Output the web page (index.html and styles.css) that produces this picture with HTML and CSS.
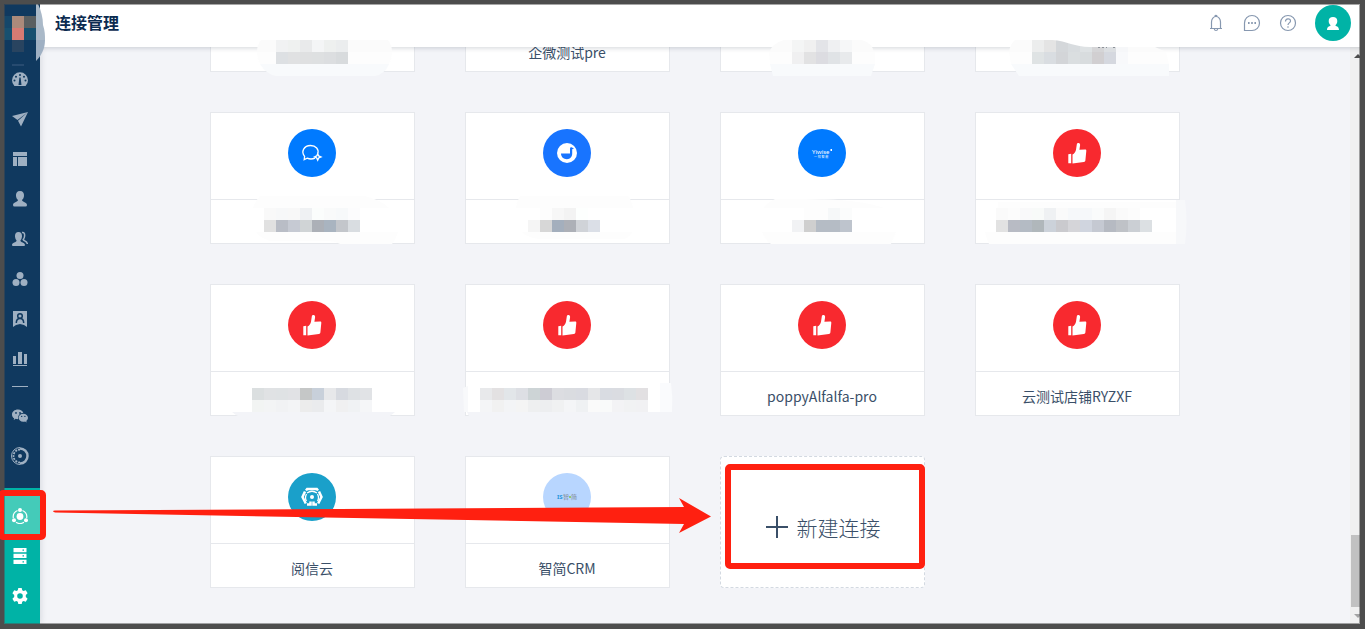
FILE: index.html
```html
<!DOCTYPE html>
<html lang="zh-CN">
<head>
  <meta charset="UTF-8">
  <meta name="viewport" content="width=device-width, initial-scale=1.0">
  <title>连接管理</title>
  <link rel="stylesheet" href="styles.css">
</head>
<body>

  <!-- shared icons -->
  <svg class="sprite" aria-hidden="true">
    <symbol id="i-thumb" viewBox="0 0 48 48">
      <path fill="#fff" d="M15.3 25.2l2.9-.5v9.6h-2.9zM19.5 34.6V25.4c2-.9 3-2.5 3.5-4.7l.8-5.2c.2-1.2.8-1.7 1.8-1.5 1.2.2 1.6 1 1.5 2.2l-.7 4.6 5.6-.2c1 0 1.4.5 1.3 1.4l-.9 9.300c-.1 1-.6 1.500-1.600 1.600z"/>
    </symbol>
  </svg>

  <nav class="sidebar">
    <div class="logo">
      <svg width="48" height="64" shape-rendering="crispEdges">
        <path fill="#15476a" d="M4 16h8v12H4z"/>
        <path fill="#17506f" d="M4 28h8v12H4zM24 28h12v12H24z"/>
        <path fill="#ab8a7b" d="M12 16h12v12H12z"/>
        <path fill="#5a5f61" d="M24 16h12v12H24z"/>
        <path fill="#d67b73" d="M12 28h12v12H12z"/>
        <path fill="#294460" d="M12 40h12v12H12z"/>
        <path fill="#274b70" d="M12 64h12v2H12z"/>
        <path fill="#aab9c8" shape-rendering="auto" d="M36 4h2c3 6 5 14 5 21 2 6 2 10 2 15h-9z"/>
        <path fill="#9fb0c3" shape-rendering="auto" d="M36 40h9c0 9-4 16-9 21z"/>
      </svg>
    </div>
    <a class="nav-item" href="#" aria-label="仪表盘"><svg viewBox="0 0 16 16"><path fill="currentColor" fill-rule="evenodd" d="M2.4 15A8 8 0 1 1 13.6 15zM8 3a1 1 0 1 0 0 2 1 1 0 0 0 0-2zM4 4.800a1 1 0 1 0 0 2 1 1 0 0 0 0-2zm8 0a1 1 0 1 0 0 2 1 1 0 0 0 0-2zM2.500 8.500a1 1 0 1 0 0 2 1 1 0 0 0 0-2zm11 0a1 1 0 1 0 0 2 1 1 0 0 0 0-2zM7.400 6.500L6.500 14h3l-.9-7.500z"/></svg></a>
    <a class="nav-item" href="#" aria-label="发送"><svg viewBox="0 0 16 16"><path fill="currentColor" d="M0 5L16 1 5.500 9zM6 9.700L16 1 9 15.500z"/></svg></a>
    <a class="nav-item" href="#" aria-label="页面"><svg viewBox="0 0 16 16"><path fill="currentColor" d="M1 1h14v4H1zM1 6h4v9H1zM6 6h9v9H6z"/></svg></a>
    <a class="nav-item" href="#" aria-label="用户"><svg viewBox="0 0 16 16"><path fill="currentColor" d="M8 0c3 0 4.300 2 4 5-.2 2-1 3.200-2 4 .2 2 5 2 5 5q0 1.500-1.500 1.500h-11Q1 15.500 1 14c0-3 4.800-3 5-5-1-.8-1.800-2-2-4-.3-3 1-5 4-5z"/></svg></a>
    <a class="nav-item" href="#" aria-label="群组"><svg viewBox="0 0 16 16"><path fill="currentColor" d="M6.500 1c2.600 0 3.700 2 3.500 4.500-.2 2-.8 3-1.600 4 .2 2 4.600 2 4.600 4.600 0 .6-.3.900-1 .9H1q-1 0-1-.9c0-2.600 4.400-2.600 4.600-4.600-.8-1-1.400-2-1.600-4C2.800 3 4 1 6.500 1z"/><path fill="none" stroke="currentColor" stroke-width="1.500" d="M10 1.500c2-.5 2.800 1.200 2.600 3.500-.1 1.700-.6 2.700-1.400 3.500.3 1.500 4 1.500 4.200 4.500"/></svg></a>
    <a class="nav-item" href="#" aria-label="标签"><svg viewBox="0 0 16 16"><g fill="currentColor"><circle cx="8" cy="4.500" r="3.500"/><circle cx="4" cy="11.500" r="3.500"/><circle cx="12" cy="11.500" r="3.500"/></g></svg></a>
    <a class="nav-item" href="#" aria-label="名片"><svg viewBox="0 0 16 16"><path fill="currentColor" d="M1 0h14v16l-3-2-4-1-4 1-3 2z"/><g fill="none" stroke="#10395f" stroke-width="1.500"><circle cx="8" cy="5" r="2.300"/><path d="M4.300 12c0-3 1-4.600 3.700-4.600s3.700 1.600 3.700 4.600"/></g></svg></a>
    <a class="nav-item" href="#" aria-label="统计"><svg viewBox="0 0 16 16"><path fill="currentColor" d="M1 5h3v8H1zM6 1h4v12H6zM12 3h3v10h-3zM1 14h14v1H1z"/></svg></a>
    <hr class="nav-line">
    <a class="nav-item" href="#" aria-label="微信"><svg viewBox="0 0 16 16"><path fill="currentColor" fill-rule="evenodd" d="M6 1.500C2.500 1.500 0 3.700 0 6.400c0 1.600.8 3 2.200 3.900L1.700 12l2-1.200c.8.300 1.600.4 2.500.3C5.500 7.500 8 5 11.300 5 10.700 3 8.700 1.500 6 1.500zM4 4a.9.900 0 1 1 0 1.800A.9.900 0 0 1 4 4zm4 0a.9.900 0 1 1 0 1.800A.9.900 0 0 1 8 4zM11.300 5.800c-2.700 0-4.700 1.700-4.700 4s2 4 4.700 4c.6 0 1.200-.1 1.800-.3l1.600.9-.4-1.500c1-.8 1.700-1.800 1.700-3.100 0-2.300-2-4-4.700-4zM9.700 7.700a.7.700 0 1 1 0 1.400.7.700 0 0 1 0-1.400zm3.200 0a.7.700 0 1 1 0 1.400.7.700 0 0 1 0-1.400z"/></svg></a>
    <a class="nav-item" href="#" aria-label="数据"><svg class="wide" viewBox="0 0 18 18"><g fill="none" stroke="currentColor"><path stroke-width="2.500" d="M9 1.500a7.500 7.500 0 0 1 0 15"/><path stroke-width="1" d="M9 .5a8.500 8.500 0 0 0 0 17"/><path stroke-width="1.800" stroke-dasharray="2 1" d="M9 2.500a6.500 6.500 0 0 0 0 13"/></g><circle cx="9" cy="9" r="2" fill="currentColor"/></svg></a>
    <div class="nav-bottom">
      <a class="nav-item active" href="#" aria-label="连接管理"><svg viewBox="0 0 16 16"><g fill="none" stroke="currentColor" stroke-width="1.200"><path d="M5.500 2.500A7 7 0 0 0 1.300 10M10.500 2.500A7 7 0 0 1 14.700 10M4 14.200a7 7 0 0 0 8 0"/></g><g fill="currentColor"><circle cx="8" cy="8.500" r="3.400"/><circle cx="8" cy="2" r="2"/><circle cx="2" cy="12.300" r="2"/><circle cx="14" cy="12.300" r="2"/></g></svg></a>
      <a class="nav-item" href="#" aria-label="存储"><svg viewBox="0 0 16 16"><path fill="currentColor" fill-rule="evenodd" d="M1.500 0h13v4.300h-13zM10.500 1.500v1.300H12V1.500zM1.500 5.800h13v4.300h-13zM10.500 7.300v1.300H12V7.300zM1.500 11.700h13V16h-13zM10.500 13.200v1.300H12v-1.300z"/></svg></a>
      <a class="nav-item" href="#" aria-label="设置"><svg viewBox="0 0 16 16"><path fill="currentColor" fill-rule="evenodd" d="M6.300 0h3.400l.5 2.300 1.300.8 2.300-.8L15.600 5.200l-1.800 1.700v2l1.800 1.800-1.800 3-2.300-.8-1.300.8L9.700 16H6.300l-.5-2.300-1.300-.8-2.300.8-1.800-3 1.800-1.700V7L.4 5.200l1.800-2.900 2.300.8 1.300-.8zM8 5.200a2.800 2.800 0 1 0 0 5.600 2.800 2.800 0 0 0 0-5.600z"/></svg></a>
    </div>
  </nav>

  <div class="page">
    <header class="topbar">
      <h1>连接管理</h1>
      <div class="tools">
        <button class="tool" aria-label="通知"><svg viewBox="0 0 20 20"><path d="M4 15.500h12M5.500 15.500V9a4.500 5.500 0 0 1 9 0v6.500M8.300 16c.3 2 3.100 2 3.400 0M9 3.200c0-1.200 2-1.200 2 0"/></svg></button>
        <button class="tool" aria-label="消息"><svg viewBox="0 0 20 20"><path d="M2.500 17.500V10A7.500 7.500 0 1 1 10 17.500z"/><path stroke-width="1.800" d="M6 10h1.600M9.200 10h1.600M12.400 10H14"/></svg></button>
        <button class="tool" aria-label="帮助"><svg viewBox="0 0 20 20"><circle cx="10" cy="10" r="7.500"/><path d="M7.500 8.500C7.500 5 12.500 5 12.500 8c0 2-2.500 1.800-2.500 4M10 13.200v1.500"/></svg></button>
        <button class="avatar" aria-label="账户"><svg viewBox="0 0 36 36"><path fill="#fff" d="M18 12c2.700 0 4.300 1.600 4.300 4 0 2-.8 3.400-2 4.300.3 1 3.700 1 3.700 4.700H12c0-3.700 3.400-3.700 3.700-4.700-1.200-.9-2-2.300-2-4.300 0-2.400 1.600-4 4.300-4z"/></svg></button>
      </div>
    </header>

    <div class="content">
      <main class="list">
        <div class="grid">

          <section class="card">
            <div class="card-top"><div class="icon"></div></div>
            <p class="name"></p>
            <svg class="mask">
              <path fill="#fbfbfb" d="M51 100h127q4 5 4 12H47q0-7 4-12z"/>
              <path fill="#fdfdfd" d="M47 112h135q0 6-3 12H50q-3-6-3-12z"/>
              <path fill="#f8fafc" d="M50 124h129q-4 10-14 12H66q-10-2-16-12z"/>
              <g data-x="66" data-y="100" data-cells="f1f2f3 eff1f0 e9eaeb f4f5f6 eef0ef ebedee"></g>
              <g data-x="66" data-y="112" data-cells="dde0e3 e0e1e2 dfe0e1 dee0e1 dcdee0 d8dbdd"></g>
            </svg>
          </section>

          <section class="card">
            <div class="card-top"><div class="icon"></div></div>
            <p class="name">企微测试pre</p>
          </section>

          <section class="card">
            <div class="card-top"><div class="icon"></div></div>
            <p class="name"></p>
            <svg class="mask">
              <path fill="#fbfbfb" d="M64 100h78q10 3 12 12H49q4-9 15-12z"/>
              <path fill="#fdfdfd" d="M49 112h106v12H50z"/>
              <path fill="#f8fafc" d="M50 124h105l-4 12H53z"/>
              <g data-x="72" data-y="100" data-cells="f4f5f5 f0f0f0 e3e4e8 eff0f2 f6f7f8"></g>
              <g data-x="72" data-y="112" data-cells="f0f0f1 e2e2e3 dcdce1 e0e3e6 e8eaec"></g>
            </svg>
          </section>

          <section class="card">
            <div class="card-top"><div class="icon"></div></div>
            <p class="name"></p>
            <svg class="mask">
              <path fill="#fbfbfb" d="M40 100h65v7h75l11 5H34q1-8 6-12z"/>
              <path fill="#fdfdfd" d="M34 112h157l3 12H36z"/>
              <path fill="#f8fafc" d="M36 124h158v12H44z"/>
              <g data-x="57" data-y="100" data-cells="eceded e4e4e4 d4d7da d8dcdf dee2e4 d5d5d7 dcdfe2 f6f7f9"></g>
              <g data-x="57" data-y="112" data-cells="dfe3e4 d9dde1 d3d5d8 dadee0 d8dcde d1cfd1 d5d8df f8f9fb"></g>
              <path class="lift" fill="#fff" d="M77 99h76v8h-38c-16 0-22-6-38-7z"/>
              <path class="lift" stroke="#8d9299" stroke-dasharray="2 2" d="M123 107.500h9M138 107.500h4"/>
            </svg>
          </section>

          <section class="card">
            <div class="card-top"><div class="icon blue"><svg viewBox="0 0 48 48"><g fill="none" stroke="#fff" stroke-width="1.300"><path d="M27 29.200c-2.500 1-5.500 1-7.800 0l-3 1.400.4-3.300c-3.900-4.600-.6-10.800 5.900-10.800 5.500 0 8.600 4 7.300 8"/><path d="M29.700 24.700l1 2.200 2.300 1-2.300 1-1 2.300-1-2.300-2.200-1 2.200-1z"/></g></svg></div></div>
            <p class="name"></p>
            <svg class="mask">
              <path fill="#fdfdfd" d="M50 84h105q16 4 24 12H43q2-7 7-12zM46 120h142q-3 9-6 12h-52q-5-3-13-3H60q-10-3-14-9z"/>
              <g data-x="54" data-y="96" data-cells="f9f9f9 f7f8f9 f8f8f8 eff1f3 fbfdfc f9fafa f7f9fa fcfcfd"></g>
              <g data-x="54" data-y="108" data-cells="e1e1e1 b9bdc6 c6cad3 d0d4d6 acb0b7 a9b4c0 c3c6cb d9dde1"></g>
            </svg>
          </section>

          <section class="card">
            <div class="card-top"><div class="icon indigo"><svg viewBox="0 0 48 48"><circle cx="24" cy="24" r="10" fill="#fff"/><path fill="#1874ff" d="M18 24.500h9V20c0-1.500.8-2 2-1.500l2 1-1.800.8v4.200c0 3.300-2 5.700-5.300 5.700S18 28 18 24.500z"/></svg></div></div>
            <p class="name"></p>
            <svg class="mask">
              <path fill="#fdfdfd" d="M55 84h108q4 5 5 12H51q1-7 4-12zM57 120h110q-4 8-12 7H75q-12-1-18-7z"/>
              <g data-x="75" data-y="96" data-cells="fdfdfd f7f7f7 f3f3f3 fdfffe"></g>
              <g data-x="63" data-y="108" data-cells="f5f5f5 d7d7d7 a4afbd adb0b7 d0d3d8 dbdfe7"></g>
            </svg>
          </section>

          <section class="card">
            <div class="card-top"><div class="icon blue"><svg viewBox="0 0 48 48"><g fill="#fff" class="logo-text"><text x="14" y="25" font-size="6">Yiwise</text><text x="16" y="29" font-size="3">一 知 智 能</text><path d="M32.500 20h1.500v2h-1.500z"/></g></svg></div></div>
            <p class="name"></p>
            <svg class="mask">
              <path fill="#fdfdfd" d="M55 87h30q55 0 79 9H44q4-6 11-9zM42 120h134q-3 6-5 12H51q-6-5-9-12z"/>
              <g data-x="84" data-y="96" data-cells="fdfdfd fdfdfd f6f8f9 fbfcfc"></g>
              <g data-x="72" data-y="108" data-cells="f1f2f4 cfcfcf b5bcc5 b5bcc5 bec4cd"></g>
            </svg>
          </section>

          <section class="card">
            <div class="card-top"><div class="icon red"><svg><use href="#i-thumb"/></svg></div></div>
            <p class="name"></p>
            <svg class="mask">
              <path fill="#fdfdfd" d="M23 90h178v42H14q-3-6-4-12h11z"/>
              <path fill="#f7f8fa" d="M201 88h9q3 22 0 44h-9z"/>
              <path fill="#fff" d="M21 96h180v24H21z"/>
              <g data-x="21" data-y="96" data-cells="fafafa fcfcfc f9f9fa f8faf9 eff1f3 fafafa f6f8fa f6f8fa fafbfb f5f5f5 fafafa fcfcfc"></g>
              <g data-x="21" data-y="108" data-cells="e2e2e2 b8bbc4 b4bbc4 b0b7bb ccd2da cacace d5d5d9 d0d5df c5c9d2 b6bac2 bfc2c7 cbcfd4 dce0e3"></g>
            </svg>
          </section>

          <section class="card">
            <div class="card-top"><div class="icon red"><svg><use href="#i-thumb"/></svg></div></div>
            <p class="name"></p>
            <svg class="mask">
              <path fill="#f3f4f8" d="M22 128h163q-9 9-30 9H50q-20-1-28-9z"/>
              <g data-x="42" data-y="104" data-cells="dbdfe0 e0e2e4 dfe2e4 e1e2e5 c5c7c7 c8d0da e7e8ea d7dae0 dee1e4 e1e3e6"></g>
              <g data-x="42" data-y="116" data-cells="f2f4f3 f3f4f5 f1f2f4 f3f4f6 ececec eaebed f4f5f7 f0f0f1 f0f2f4 f5f6f8"></g>
            </svg>
          </section>

          <section class="card">
            <div class="card-top"><div class="icon red"><svg><use href="#i-thumb"/></svg></div></div>
            <p class="name"></p>
            <svg class="mask">
              <path fill="#f8f9fb" d="M-2 104l5-2v26h-4z"/>
              <path fill="#fff" d="M183 100h12v28h-12z"/>
              <path fill="#fafbfd" d="M195 99h11q2 14 1 29h-12z"/>
              <path fill="#f3f4f8" d="M2 128h205v10H12q-8-3-10-10z"/>
              <g data-x="15" data-y="104" data-cells="e8e9eb e3e1e2 e2e6e9 dddfe4 cdd4d6 cdccd4 dcdde1 dadce0 d9dbe1 e5e6e8 d9dce2 dadce1 dde1e4 e2e0e2"></g>
              <g data-x="15" data-y="116" data-cells="f4f5f7 f1f1f1 f3f4f6 f4f4f4 eeeff0 edeef0 f0f1f2 f4f5f7 eff1f3 fafafa f9fafa f3f3f5 f1f2f3 f1f1f3"></g>
            </svg>
          </section>

          <section class="card">
            <div class="card-top"><div class="icon red"><svg><use href="#i-thumb"/></svg></div></div>
            <p class="name">poppyAlfalfa-pro</p>
          </section>

          <section class="card">
            <div class="card-top"><div class="icon red"><svg><use href="#i-thumb"/></svg></div></div>
            <p class="name">云测试店铺RYZXF</p>
          </section>

          <section class="card">
            <div class="card-top"><div class="icon cyan"><svg viewBox="0 0 48 48"><g fill="none" stroke="#fff"><path stroke-width="2.500" d="M18 17.500l1.200-1.500h9.600l1.200 1.500M31 18.500l2.500 5.500-3.300 6.500M17 18.500L14.500 24l3.300 6.500M19 31.500h3.500v-3M29 31.500h-3.500v-3"/><path stroke-width="1.300" d="M19 20q5-3.500 10 0M18.500 21q-2 4 0 7M29.500 21q2 4 0 7"/></g><circle cx="24" cy="24" r="2" fill="#fff"/></svg></div></div>
            <p class="name">阅信云</p>
          </section>

          <section class="card">
            <div class="card-top"><div class="icon pale"><svg viewBox="0 0 48 48"><g class="logo-text" font-size="6"><text x="14" y="26" fill="#2a97dd" font-weight="bold">IS</text><text x="20" y="26" fill="#7c8794">智</text><text x="28" y="26" fill="#7c8794">简</text></g><circle cx="27" cy="24" r="1" fill="#84c441"/></svg></div></div>
            <p class="name">智简CRM</p>
          </section>

          <button class="card card-new">
            <svg viewBox="0 0 22 22"><path fill="none" stroke="currentColor" stroke-width="2" d="M11 0v22M0 11h22"/></svg>
            新建连接
          </button>

        </div>
      </main>

      <div class="scrollbar">
        <span class="arrow up"></span>
        <span class="thumb"></span>
        <span class="arrow down"></span>
      </div>
    </div>
  </div>

  <div class="frame"></div>

  <svg class="pointer" viewBox="0 0 660 40" aria-hidden="true">
    <path fill="#ff2010" d="M0 13.500Q0 12.500 2 12.500L631 9 626 0 658 18.500 626 35 631 26 2 14.500z"/>
  </svg>

  <script src="script.js"></script>
</body>
</html>
```
FILE: styles.css
```css
* {
  box-sizing: border-box;
}

body {
  margin: 0;
  padding-bottom: 5px;
  height: 100vh;
  display: flex;
  overflow: hidden;
  position: relative;
  background: #f3f4f8;
  color: #3a4f68;
  font-family: "Noto Sans CJK SC", "Noto Sans", sans-serif;
  font-size: 14px;
}

h1,
p {
  margin: 0;
}

button {
  font: inherit;
  color: inherit;
  border: none;
  padding: 0;
  background: none;
  cursor: pointer;
}

.sprite {
  position: absolute;
  width: 0;
  height: 0;
}

/* Sidebar */
.sidebar {
  width: 40px;
  flex: none;
  display: flex;
  flex-direction: column;
  background: #10395f;
  color: #9fb0c2;
  box-shadow: 1px 0 6px rgba(0, 21, 41, 0.12);
}

.logo {
  height: 59px;
}

.logo svg {
  display: block;
  position: relative;
  overflow: visible;
  z-index: 2;
}

.nav-item {
  height: 40px;
  display: flex;
  align-items: center;
  justify-content: center;
  color: inherit;
}

.nav-item svg {
  width: 16px;
  height: 16px;
}

.nav-item svg.wide {
  width: 18px;
  height: 18px;
}

.nav-line {
  width: 16px;
  height: 1px;
  margin: 7px auto 9px;
  border: none;
  background: #9fb0c2;
}

.nav-bottom {
  margin-top: auto;
  padding: 8px 0;
  background: #00b3a6;
  color: #fff;
}

.nav-item.active {
  position: relative;
  background: #44cbb9;
}

.nav-item.active::after {
  content: "";
  position: absolute;
  inset: -6px -6px -4px -2px;
  border: 6px solid #ff2010;
  border-radius: 5px;
  z-index: 4;
}

/* Header */
.page {
  flex: 1;
  min-width: 0;
  display: flex;
  flex-direction: column;
}

.topbar {
  height: 47px;
  flex: none;
  display: flex;
  align-items: center;
  justify-content: space-between;
  padding: 0 14px 2px 15px;
  position: relative;
  z-index: 1;
  background: #fff;
  box-shadow: 0 1px 5px rgba(0, 21, 41, 0.18);
}

.topbar h1 {
  font-size: 16px;
  line-height: 22px;
  padding-bottom: 2px;
  font-weight: bold;
  color: #0b2b50;
}

.tools {
  display: flex;
  align-items: center;
  gap: 16px;
}

.tool,
.tool svg {
  display: block;
  width: 20px;
  height: 20px;
}

.tool svg {
  fill: none;
  stroke: #8798b0;
  stroke-width: 1.2;
}

.avatar {
  width: 36px;
  height: 36px;
  margin-left: 1px;
  border-radius: 50%;
  background: #00b3a6;
}

.avatar svg {
  display: block;
}

/* Connection list */
.content {
  flex: 1;
  min-height: 0;
  display: flex;
}

.list {
  flex: 1;
  display: flex;
  flex-direction: column;
  justify-content: flex-end;
  padding: 0 24px 36px;
}

.grid {
  width: 100%;
  max-width: 970px;
  margin: 0 auto;
  display: grid;
  grid-template-columns: repeat(4, 1fr);
  gap: 40px 50px;
}

.card {
  height: 132px;
  display: flex;
  flex-direction: column;
  position: relative;
  background: #fff;
  border: 1px solid #e6e8ec;
}

.card-top {
  height: 87px;
  padding: 16px 1px 0 0;
  border-bottom: 1px solid #e6e8ec;
}

.icon {
  width: 48px;
  height: 48px;
  margin: 0 auto;
  border-radius: 50%;
}

.icon svg {
  display: block;
  width: 48px;
  height: 48px;
}

.blue {
  background: #007aff;
}

.indigo {
  background: #1874ff;
}

.red {
  background: #f8292f;
}

.cyan {
  background: #1aa0ca;
}

.pale {
  background: #b8d6ff;
}

.logo-text {
  font-family: "Noto Sans", "Noto Sans CJK SC", sans-serif;
}

.name {
  padding: 13px 1px 0 0;
  line-height: 22px;
  text-align: center;
}

.mask {
  position: absolute;
  top: -1px;
  left: -1px;
  width: 100%;
  height: 100%;
  overflow: visible;
  z-index: 2;
}

.card-new {
  flex-direction: row;
  align-items: center;
  justify-content: center;
  gap: 9px;
  padding: 10px 0 0 1px;
  border: 1px dashed #d3d9e1;
  border-radius: 4px;
  font-size: 21px;
  font-weight: 300;
}

.card-new svg {
  width: 22px;
  height: 22px;
}

.card-new::after {
  content: "";
  position: absolute;
  inset: 7px -1px 18px 4px;
  border: 6px solid #ff2010;
  border-radius: 5px;
}

/* Scrollbar */
.scrollbar {
  width: 15px;
  display: flex;
  flex-direction: column;
  align-items: center;
  padding: 7px 0 6px;
  background: #f0f0f0;
}

.scrollbar .thumb {
  width: 13px;
  height: 72px;
  margin: auto 0 7px;
  background: #c1c1c1;
}

.arrow {
  border: 4px solid transparent;
}

.arrow.up {
  border-top: none;
  border-bottom-color: #4d4d4d;
}

.arrow.down {
  border-bottom: none;
  border-top-color: #a3a3a3;
}

/* Window edge and the pointer drawn over the page */
.frame {
  position: absolute;
  inset: 0;
  border: solid #4d4d4d;
  border-width: 4px 5px 5px 4px;
  box-shadow: inset 0 0 0 1px rgba(77, 77, 77, 0.5);
  pointer-events: none;
  z-index: 3;
}

.pointer {
  position: absolute;
  left: 53px;
  top: 498px;
  width: 660px;
  height: 40px;
  pointer-events: none;
  z-index: 4;
}
```
FILE: script.js
```js
const CELL = 12;

document.querySelectorAll('[data-cells]').forEach(function (row) {
  row.dataset.cells.split(' ').forEach(function (color, i) {
    const rect = document.createElementNS('http://www.w3.org/2000/svg', 'rect');
    rect.setAttribute('x', Number(row.dataset.x) + i * CELL);
    rect.setAttribute('y', row.dataset.y);
    rect.setAttribute('width', CELL);
    rect.setAttribute('height', CELL);
    rect.setAttribute('fill', '#' + color);
    row.appendChild(rect);
  });
});
```
